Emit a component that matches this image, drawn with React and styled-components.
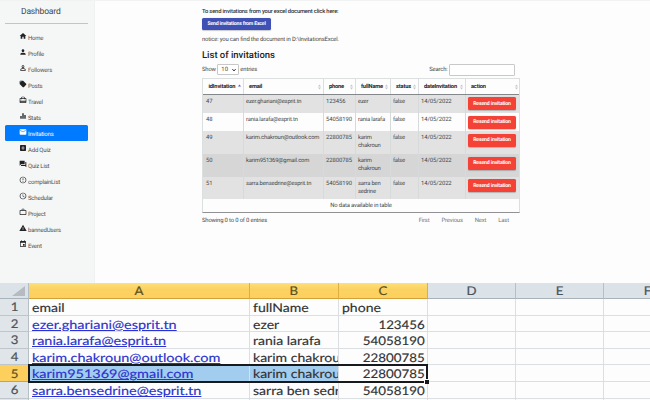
import React from "react";
import styled, { createGlobalStyle, css } from "styled-components";
import {
  MdHome, MdPerson, MdPersonOutline, MdLocalOffer, MdCardTravel, MdEqualizer, MdEmail,
  MdAddBox, MdForum, MdErrorOutline, MdAccessTime, MdWorkOutline, MdWarning, MdEvent,
} from "react-icons/md";

const Global = createGlobalStyle`
  * { box-sizing: border-box; }
  body { margin: 0; background: #fdfdfd; overflow: hidden; text-rendering: geometricPrecision; }
`;

const Page = styled.div`
  width: 650px;
  height: 400px;
  overflow: hidden;
  display: flex;
  flex-direction: column;
  font-family: Roboto, "Liberation Sans", sans-serif;
  font-size: 5.9px;
  color: #444749;
`;

const Dashboard = styled.section`
  display: flex;
  height: 283px;
  flex: none;
  border-top: 1px solid #f1f2f2;
  letter-spacing: -0.17px;
`;

const Sidebar = styled.nav`
  width: 95px;
  padding: 0 6px 0 5px;
  background: #f5f7f7;
  border-right: 1px solid #f0f2f2;
`;

const Brand = styled.div`
  height: 23px;
  padding: 4.5px 0 0 16px;
  font-size: 8.5px;
  line-height: 13px;
  border-bottom: 1px solid #c3c5c5;
  margin-bottom: 5px;
`;

const NavItem = styled.a`
  display: flex;
  align-items: flex-start;
  height: 16px;
  padding: 3px 0 0 13.5px;
  border-radius: 1.5px;
  font-size: 6px;
  letter-spacing: -0.2px;
  line-height: 12px;
  color: ${(p) => (p.$active ? "#fff" : "#4c4f50")};
  background: ${(p) => (p.$active ? "#007bff" : "transparent")};
  svg {
    width: 8px;
    height: 8px;
    margin-right: 1.5px;
    color: ${(p) => (p.$active ? "#fff" : "#202223")};
  }
  span { padding-top: 0.5px; }
`;

const Main = styled.main`
  width: 424.5px;
  padding: 5px 0 0 107px;
`;

const Lead = styled.p`
  margin: 0;
  padding-top: 1px;
  font-size: 5.8px;
  font-weight: 500;
  line-height: 10.5px;
  color: #303234;
  white-space: nowrap;
`;

const Button = styled.button`
  display: block;
  border: 0;
  padding: 0;
  width: ${(p) => (p.$danger ? "48px" : "69px")};
  height: ${(p) => (p.$danger ? "13px" : "12.5px")};
  border-radius: 1.5px;
  background: ${(p) => (p.$danger ? "#f44336" : "#3f51b5")};
  color: #fff;
  font: 700 5.2px / 12px Roboto, sans-serif;
  letter-spacing: ${(p) => (p.$danger ? "-0.17px" : "-0.2px")};
  text-rendering: geometricPrecision;
  box-shadow: 0 0.5px 1px #0003;
  white-space: nowrap;
`;

const Notice = styled.p`
  margin: 4.5px 0 0;
  font-size: 5.9px;
  line-height: 11.5px;
  white-space: nowrap;
`;

const Title = styled.h1`
  margin: 3px 0 0;
  font-size: 9.5px;
  font-weight: 500;
  line-height: 13px;
  letter-spacing: -0.02px;
  color: #222426;
`;

const Controls = styled.div`
  display: flex;
  align-items: center;
  justify-content: space-between;
  height: 12px;
  width: 313px;
  margin-top: 1.5px;
`;

const Control = styled.label`
  display: flex;
  align-items: center;
  gap: 1.5px;
`;

const Select = styled.span`
  display: flex;
  align-items: center;
  justify-content: space-between;
  width: 21.5px;
  height: 10.5px;
  padding: 0 2px 0 3px;
  border: 1px solid #c8c8c8;
  border-radius: 1px;
  background: #fff;
  letter-spacing: 0;
  svg { width: 4px; height: 4px; fill: none; stroke: #111; stroke-width: 1.2; }
`;

const Search = styled.input`
  width: 66px;
  height: 12px;
  border: 1px solid #c9c9c9;
  border-radius: 1px;
  background: #fff;
  padding: 0;
`;

const Grid = styled.div`
  margin-top: 2.5px;
  width: 318px;
  border: 1px solid #dcdfe0;
  border-bottom-color: #8f9192;
`;

const Row = styled.div`
  display: grid;
  grid-template-columns: 39.5px 80px 32px 35px 28px 47px 1fr;
  height: ${(p) => p.$h}px;
  background: ${(p) => p.$bg || "#fdfdfd"};
  ${(p) => p.$head && css`
    border-bottom: 1px solid #85888a;
    font-weight: 700;
    color: #222;
  `}
`;

const Cell = styled.div`
  padding: 2.5px 0 0 3px;
  line-height: 8px;
  font-size: 5.85px;
  letter-spacing: ${(p) => (p.$numeric ? "-0.05px" : "-0.19px")};
  & + & { border-left: 1px solid #d7dada; padding-left: 2.5px; }
  span { display: block; padding-top: 0.7px; }
`;

const HeadCell = styled.div`
  display: flex;
  align-items: center;
  justify-content: space-between;
  padding: 1px 1.5px 0 5.5px;
  font-size: 5.7px;
  & + & { border-left: 1px solid #dcdfe0; }
  svg { width: 3px; height: 6px; fill: #c5c7c9; }
  svg.sorted { fill: #5960ce; }
`;

const Empty = styled.div`
  height: 13px;
  line-height: 14px;
  text-align: center;
`;

const Footer = styled.footer`
  display: flex;
  justify-content: space-between;
  width: 317px;
  padding: 3.3px 10px 0 0;
  line-height: 10px;
`;

const Pager = styled.div`
  display: flex;
  gap: 12px;
  color: #737678;
`;

const Sheet = styled.section`
  display: grid;
  grid-template-columns: 29px 221px 89px 89px 88px 88px 88px;
  grid-template-rows: 16px 16.5px 16.5px 16.5px 16.5px 17px 16.5px 8px;
  width: 692px;
  font-family: Lato, "Open Sans", sans-serif;
  font-size: 12px;
  color: #303234;
  position: relative;
`;

const ColHead = styled.div`
  display: flex;
  align-items: center;
  justify-content: center;
  background: ${(p) => (p.$on ? "linear-gradient(#ffe07a, #fbd262 40%, #fdd05e)" : "#dce3e8")};
  border-right: 1px solid ${(p) => (p.$on ? "#dfae42" : "#b6bfc5")};
  border-bottom: 1px solid ${(p) => (p.$on ? "#d4a039" : "#a9b2b8")};
  color: ${(p) => (p.$on ? "#5d501f" : "#4d5459")};
  span { transform: scaleX(1.1); -webkit-text-stroke: 0.2px currentColor; }
`;

const Corner = styled(ColHead)`
  justify-content: flex-end;
  padding-right: 3px;
  svg { width: 13px; height: 10px; fill: #b5bcc1; }
`;

const RowHead = styled(ColHead)`
  background: ${(p) => (p.$on ? "#fdd05e" : "#dfe5e9")};
  border-bottom-color: ${(p) => (p.$on ? "#d4a039" : "#bec6cb")};
`;

const SheetCell = styled.div`
  overflow: hidden;
  white-space: nowrap;
  padding: 0 2.6px;
  line-height: 17px;
  border-right: 1px solid #dcdfe1;
  border-bottom: 1px solid #dcdfe1;
  background: ${(p) => (p.$on ? "#a3cdee" : "#fdfdfd")};
  text-align: ${(p) => (p.$right ? "right" : "left")};
  span {
    display: inline-block;
    transform: scaleX(${(p) => (p.$link ? 1.205 : p.$right ? 1.11 : 1.17)});
    transform-origin: ${(p) => (p.$right ? "right" : "left")};
    -webkit-text-stroke: 0.15px currentColor;
  }
  ${(p) => p.$link && css`
    span { color: #2a33cf; text-decoration: underline; text-underline-offset: 1px; }
  `}
`;

const Selection = styled.div`
  position: absolute;
  left: 28px;
  top: 81px;
  width: 400px;
  height: 18.5px;
  border: 2px solid #171a1c;
  pointer-events: none;
  &::after {
    content: "";
    position: absolute;
    right: -3px;
    bottom: -3px;
    width: 4px;
    height: 4px;
    background: #171a1c;
    border: solid #fdfdfd;
    border-width: 1px 0 0 1px;
  }
`;

const nav = [
  ["Home", MdHome], ["Profile", MdPerson], ["Followers", MdPersonOutline], ["Posts", MdLocalOffer],
  ["Travel", MdCardTravel], ["Stats", MdEqualizer], ["Invitations", MdEmail], ["Add Quiz", MdAddBox],
  ["Quiz List", MdForum], ["complainList", MdErrorOutline], ["Schedular", MdAccessTime],
  ["Project", MdWorkOutline], ["bannedUsers", MdWarning], ["Event", MdEvent],
];

const columns = ["idInvitation", "email", "phone", "fullName", "status", "dateInvitation", "action"];

const invitations = [
  { id: 47, email: "ezer.ghariani@esprit.tn", phone: "123456", name: "ezer", h: 18.5, bg: "#e2e2e2" },
  { id: 48, email: "rania.larafa@esprit.tn", phone: "54058190", name: "rania larafa", h: 18, bg: "#fdfdfd" },
  { id: 49, email: "karim.chakroun@outlook.com", phone: "22800785", name: "karim chakroun", h: 23, bg: "#e2e2e2" },
  { id: 50, email: "karim951369@gmail.com", phone: "22800785", name: "karim chakroun", h: 22.5, bg: "#d6d6d6" },
  { id: 51, email: "sarra.bensedrine@esprit.tn", phone: "54058190", name: "sarra ben sedrine", h: 22.5, bg: "#e2e2e2" },
];

const sheetRows = [["email", "fullName", "phone"], ...invitations.map((r) => [r.email, r.name, r.phone]), ["", "", ""]];

function SortIcon({ sorted }) {
  return (
    <svg viewBox="0 0 6 12" className={sorted ? "sorted" : undefined}>
      <path d="M3 1 6 5H0z" />
      {!sorted && <path d="M3 11 0 7h6z" />}
    </svg>
  );
}

export default function App() {
  return (
    <Page>
      <Global />
      <Dashboard>
        <Sidebar>
          <Brand>Dashboard</Brand>
          {nav.map(([label, Icon]) => (
            <NavItem key={label} $active={label === "Invitations"}>
              <Icon /><span>{label}</span>
            </NavItem>
          ))}
        </Sidebar>
        <Main>
          <Lead>To send invitations from your excel document click here:</Lead>
          <Button>Send invitations from Excel</Button>
          <Notice>notice: you can find the document in D:\InvitationsExcel.</Notice>
          <Title>List of invitations</Title>
          <Controls>
            <Control>
              Show
              <Select>10<svg viewBox="0 0 6 6"><path d="M.5 1.5 3 4.5 5.5 1.5" /></svg></Select>
              entries
            </Control>
            <Control>Search:<Search aria-label="Search" /></Control>
          </Controls>
          <Grid>
            <Row $h={15.5} $head>
              {columns.map((c, i) => <HeadCell key={c}>{c}<SortIcon sorted={i === 0} /></HeadCell>)}
            </Row>
            {invitations.map((r) => (
              <Row key={r.id} $h={r.h} $bg={r.bg}>
                <Cell $numeric><span>{r.id}</span></Cell>
                <Cell><span>{r.email}</span></Cell>
                <Cell $numeric><span>{r.phone}</span></Cell>
                <Cell><span>{r.name}</span></Cell>
                <Cell><span>false</span></Cell>
                <Cell $numeric><span>14/05/2022</span></Cell>
                <Cell><Button $danger>Resend invitation</Button></Cell>
              </Row>
            ))}
            <Empty>No data available in table</Empty>
          </Grid>
          <Footer>
            <span>Showing 0 to 0 of 0 entries</span>
            <Pager><span>First</span><span>Previous</span><span>Next</span><span>Last</span></Pager>
          </Footer>
        </Main>
      </Dashboard>
      <Sheet>
        <Corner><svg viewBox="0 0 13 10"><path d="M13 0v10H0z" /></svg></Corner>
        {["A", "B", "C", "D", "E", "F"].map((c, i) => <ColHead key={c} $on={i < 3}><span>{c}</span></ColHead>)}
        {sheetRows.map((r, n) => (
          <React.Fragment key={n}>
            <RowHead $on={n === 4}><span>{n < 6 ? n + 1 : ""}</span></RowHead>
            <SheetCell $link={n > 0} $on={n === 4}><span>{r[0]}</span></SheetCell>
            <SheetCell $on={n === 4}><span>{r[1]}</span></SheetCell>
            <SheetCell $right={n > 0}><span>{r[2]}</span></SheetCell>
            <SheetCell /><SheetCell /><SheetCell />
          </React.Fragment>
        ))}
        <Selection />
      </Sheet>
    </Page>
  );
}
